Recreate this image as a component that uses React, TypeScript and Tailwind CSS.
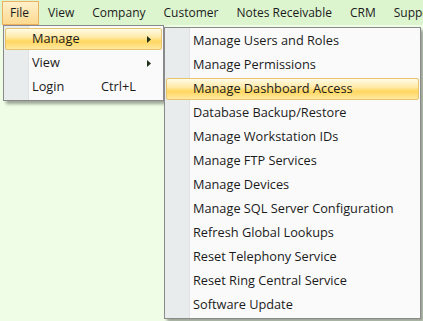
import React from 'react'

const font = { fontFamily: '"Open Sans", "Noto Sans", sans-serif' }

const topItems = ['File', 'View', 'Company', 'Customer', 'Notes Receivable', 'CRM', 'Support']

const subItems = [
  'Manage Users and Roles',
  'Manage Permissions',
  'Manage Dashboard Access',
  'Database Backup/Restore',
  'Manage Workstation IDs',
  'Manage FTP Services',
  'Manage Devices',
  'Manage SQL Server Configuration',
  'Refresh Global Lookups',
  'Reset Telephony Service',
  'Reset Ring Central Service',
  'Software Update',
]

// menu surface: grey image-margin gutter on the left, then the white list
const menuBox =
  'border border-[#8a8a8a] pt-[2px] shadow-[3px_3px_3px_rgba(0,0,0,0.35)] bg-[linear-gradient(to_right,#e9ecec_24px,#dfe2e2_24px,#dfe2e2_25px,#fafafa_25px)] flex flex-col'

function Arrow() {
  return (
    <svg width="4" height="7" viewBox="0 0 4 7" className="ml-auto shrink-0">
      <path d="M0 0 L4 3.5 L0 7 Z" fill="#1f2f1a" />
    </svg>
  )
}

function Row({
  label,
  hot,
  arrow,
  shortcut,
}: {
  label: string
  hot?: boolean
  arrow?: boolean
  shortcut?: string
}) {
  return (
    <div
      className={`h-[22px] mx-[1px] mb-[2px] flex items-center pl-[26px] pr-[10px] border rounded-[2px] text-[12.75px] text-[#1b1b1b] whitespace-nowrap ${
        hot
          ? 'border-[#e6c36e] bg-[linear-gradient(to_bottom,#fffbe6_0%,#ffeaa8_40%,#ffd760_62%,#ffe8a0_100%)]'
          : 'border-transparent'
      }`}
    >
      <span className={shortcut ? 'w-[69px]' : ''}>{label}</span>
      {shortcut && <span>{shortcut}</span>}
      {arrow && <Arrow />}
    </div>
  )
}

export default function App() {
  return (
    <div className="relative w-[423px] h-[321px] overflow-hidden bg-[#effce6]" style={font}>
      <div className="h-[25px] bg-[#ddf5cf] flex items-center pl-[2px]">
        {topItems.map((t, i) => (
          <div
            key={t}
            className={`h-[24px] flex items-center text-[12px] text-[#1b1b1b] whitespace-nowrap border ${
              i === 0
                ? 'pl-[7px] pr-[9px] border-[#eeb25e] bg-[linear-gradient(to_bottom,#fff0cb,#fdd98f)]'
                : 'px-[8px] border-transparent'
            }`}
          >
            {t}
          </div>
        ))}
      </div>

      {/* File dropdown */}
      <div className={`absolute left-[3px] top-[25px] w-[161px] ${menuBox}`}>
        <Row label="Manage" hot arrow />
        <Row label="View" arrow />
        <Row label="Login" shortcut="Ctrl+L" />
      </div>

      {/* Manage submenu */}
      <div className={`absolute left-[164px] top-[27px] w-[257px] ${menuBox}`}>
        {subItems.map((s) => (
          <Row key={s} label={s} hot={s === 'Manage Dashboard Access'} />
        ))}
      </div>
    </div>
  )
}
